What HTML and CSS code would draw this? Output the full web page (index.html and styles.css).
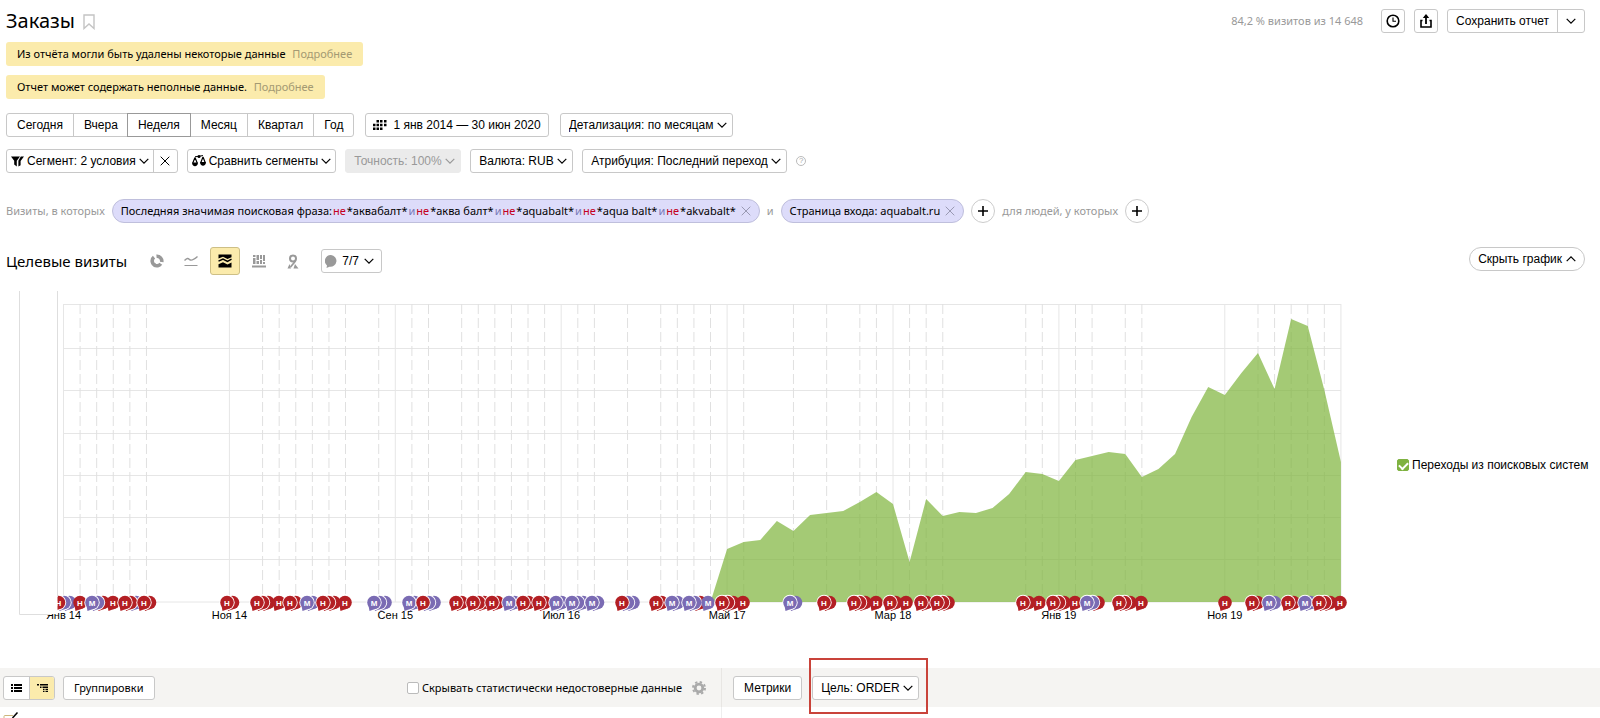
FILE: index.html
```
<!DOCTYPE html>
<html lang="ru">
<head>
<meta charset="utf-8">
<title>Заказы</title>
<meta name="viewport" content="width=device-width, initial-scale=1">
<link rel="stylesheet" href="styles.css">
</head>
<body>
<svg class="sprite" aria-hidden="true">
  <symbol id="i-chevron" viewBox="0 0 10 6"><path d="M.7.8 5 5.1 9.3.8" fill="none" stroke="currentColor" stroke-width="1.2"/></symbol>
  <symbol id="i-close" viewBox="0 0 10 10"><path d="M.7.7l8.6 8.6M9.3.7.7 9.3" fill="none" stroke="currentColor" stroke-width="1"/></symbol>
  <symbol id="i-plus" viewBox="0 0 10 10"><path d="M5 0v10M0 5h10" fill="none" stroke="currentColor" stroke-width="1.6"/></symbol>
</svg>

<header class="header">
  <h1 class="title">Заказы</h1>
  <button class="bare" aria-label="В избранное"><svg class="i-bookmark" viewBox="0 0 12 16"><path d="M1 1h10v13.5L6 10l-5 4.500z" fill="none" stroke="#c4c4c4" stroke-width="1.400"/></svg></button>
  <span class="visits">84,2 % визитов из 14 648</span>
  <button class="btn square" aria-label="История"><svg width="14" height="14" viewBox="0 0 14 14"><circle cx="7" cy="7" r="5.800" fill="none" stroke="#000" stroke-width="1.600"/><path d="M7 3.500V7.200h3" fill="none" stroke="#000" stroke-width="1.100"/></svg></button>
  <button class="btn square" aria-label="Экспорт"><svg width="12" height="14" viewBox="0 0 12 14"><path d="M2.500 6.500H1V13h10V6.500H9.500" fill="none" stroke="#000" stroke-width="1.600"/><path d="M6 3v7" stroke="#000" stroke-width="1.800"/><path d="M6 0l3.200 4H2.800z"/></svg></button>
  <div class="group save">
    <button class="seg">Сохранить отчет</button>
    <button class="seg narrow" aria-label="Ещё"><svg class="chev"><use href="#i-chevron"/></svg></button>
  </div>
</header>

<main>
<section class="notices">
  <p class="notice">Из отчёта могли быть удалены некоторые данные <a href="#">Подробнее</a></p>
  <p class="notice">Отчет может содержать неполные данные. <a href="#">Подробнее</a></p>
</section>

<div class="row periods">
  <div class="group">
    <button class="seg">Сегодня</button>
    <button class="seg">Вчера</button>
    <button class="seg current">Неделя</button>
    <button class="seg">Месяц</button>
    <button class="seg">Квартал</button>
    <button class="seg">Год</button>
  </div>
  <button class="btn date"><svg width="14" height="10" viewBox="0 0 14 10"><path d="M3.500 0h2.500v2.500H3.500zM7 0h2.500v2.500H7zM11 0h2.500v2.500H11zM0 3.700h2.500v2.500H0zM3.500 3.700h2.500v2.500H3.500zM7 3.700h2.500v2.500H7zM11 3.700h2.500v2.500H11zM0 7.400h2.500v2.500H0zM3.500 7.400h2.500v2.500H3.500zM7 7.400h2.500v2.500H7z"/></svg>1 янв 2014 — 30 июн 2020</button>
  <span class="select"><select aria-label="Детализация"><option>Детализация: по месяцам</option></select><svg class="chev"><use href="#i-chevron"/></svg></span>
</div>

<div class="row segments">
  <div class="group">
    <button class="seg tight"><svg width="13" height="11" viewBox="0 0 13 11"><path d="M0 .5h9L5.800 4.800V10.500L3.200 8.500V4.800zM9.800.5H13L9.600 4.900v4.300L7.400 10.500V4.800z"/></svg>Сегмент: 2 условия<svg class="chev"><use href="#i-chevron"/></svg></button>
    <button class="seg cross" aria-label="Сбросить сегмент"><svg width="10" height="10"><use href="#i-close"/></svg></button>
  </div>
  <button class="btn tight"><svg width="14" height="12" viewBox="0 0 14 12"><path d="M3 1.800 11 .6" stroke="#000" stroke-width="1"/><circle cx="7" cy="1.600" r="1.500"/><path d="M3 2.500.8 8M3 2.500 5.200 8M11 2 8.800 7.500M11 2l2.200 5.500" fill="none" stroke="#000" stroke-width="1.200"/><path d="M0 7.600h6c0 5-6 5-6 0zM8 7h6c0 5-6 5-6 0z"/></svg>Сравнить сегменты<svg class="chev"><use href="#i-chevron"/></svg></button>
  <span class="select off"><select aria-label="Точность" disabled><option>Точность: 100%</option></select><svg class="chev"><use href="#i-chevron"/></svg></span>
  <span class="select"><select aria-label="Валюта"><option>Валюта: RUB</option></select><svg class="chev"><use href="#i-chevron"/></svg></span>
  <span class="select"><select aria-label="Атрибуция"><option>Атрибуция: Последний переход</option></select><svg class="chev"><use href="#i-chevron"/></svg></span>
  <button class="help" aria-label="Справка">?</button>
</div>

<div class="row filters">
  <span class="muted">Визиты, в которых</span>
  <span class="pill"><span class="terms">Последняя значимая поисковая фраза: <b>не</b> *аквабалт* <i>и</i> <b>не</b> *аква балт* <i>и</i> <b>не</b> *aquabalt* <i>и</i> <b>не</b> *aqua balt* <i>и</i> <b>не</b> *akvabalt*</span><button class="bare" aria-label="Удалить условие"><svg width="10" height="10"><use href="#i-close"/></svg></button></span>
  <span class="muted">и</span>
  <span class="pill"><span>Страница входа: aquabalt.ru</span><button class="bare" aria-label="Удалить условие"><svg width="10" height="10"><use href="#i-close"/></svg></button></span>
  <button class="round" aria-label="Добавить условие для визитов"><svg width="10" height="10"><use href="#i-plus"/></svg></button>
  <span class="muted">для людей, у которых</span>
  <button class="round" aria-label="Добавить условие для людей"><svg width="10" height="10"><use href="#i-plus"/></svg></button>
</div>

<section>
  <div class="chart-head">
    <h2 class="subtitle">Целевые визиты</h2>
    <div class="views">
      <button class="view" aria-label="Круговая диаграмма"><svg width="14" height="14" viewBox="0 0 14 14"><g fill="none" stroke="#999" stroke-width="3.600"><path d="M6.500 2.300A4.800 4.800 0 0 1 11.700 8"/><path d="M10.800 9.800A4.800 4.800 0 0 1 4.300 11"/><path d="M5.500 11.500A4.800 4.800 0 0 1 4 3.200"/></g></svg></button>
      <button class="view" aria-label="Линии"><svg width="14" height="12" viewBox="0 0 14 12"><path d="M.5 5.500C3 3 4 3 5.500 4.500S9 5.500 13.500 1.500" fill="none" stroke="#999" stroke-width="1.400"/><path d="M.5 10.500h13" stroke="#999" stroke-width="1"/></svg></button>
      <button class="view active" aria-label="Области"><svg width="14" height="14" viewBox="0 0 14 14"><path d="M.5.5h13v2.700L9.500 5 5 2.800.5 4.500z"/><path d="M.5 7.200 5 5l4.500 2.300 4-2.100" fill="none" stroke="#000" stroke-width="1.500"/><path d="M.5 10.200 5 8.200l4.500 2.300 4-2V13.500H.5z"/></svg></button>
      <button class="view" aria-label="Столбцы"><svg width="14" height="14" viewBox="0 0 14 14" fill="#999"><path d="M1 1h2.500v2H1zM1 4h2.500v6H1zM4.500 1H7v5H4.500zM4.500 7H7v3H4.500zM8 1h2v4H8zM8 6h2v4H8zM11 1h2v6h-2zM11 8h2v2h-2zM0 11.500h14v2H0z"/></svg></button>
      <button class="view" aria-label="Карта"><svg width="12" height="15" viewBox="0 0 12 15"><circle cx="6" cy="4.500" r="3" fill="none" stroke="#999" stroke-width="2"/><path d="M8.500 7 3.500 13" stroke="#999" stroke-width="1.800"/><path d="M.5 14.500 2.500 10l1.500 4.500zM8 10l3.500 4.500H6.500z" fill="#999"/></svg></button>
    </div>
    <button class="btn notes"><svg width="12" height="13" viewBox="0 0 12 13"><path d="M6 0a6 5.900 0 1 1-1.500 11.700L1.500 13 2 10.400A6 5.900 0 0 1 6 0z" fill="#999"/></svg>7/7<svg class="chev"><use href="#i-chevron"/></svg></button>
    <button class="btn hide">Скрыть график<svg class="chev up"><use href="#i-chevron"/></svg></button>
  </div>
  <div class="chart-body">
    <svg class="chart" id="chart" viewBox="0 0 1374 342" role="img" aria-label="Целевые визиты по месяцам"></svg>
    <label class="legend"><input type="checkbox" checked>Переходы из поисковых систем</label>
  </div>
</section>

<section class="table-bar">
  <div class="bar-left">
    <div class="group">
      <button class="seg mode" aria-label="Список"><svg width="11" height="8" viewBox="0 0 11 8"><path d="M0 0h2v2H0zM3 0h8v2H3zM0 3h2v2H0zM3 3h8v2H3zM0 6h2v2H0zM3 6h8v2H3z"/></svg></button>
      <button class="seg mode chosen" aria-label="Дерево"><svg width="11" height="8" viewBox="0 0 11 8"><path d="M0 0h2v1.500H0zM3 0h8v1.500H3zM3 2.500h1.500V4H3zM5.500 2.500H11V4H5.500zM6 4.800h1.500v1.300H6zM8.500 4.800H11v1.300H8.500zM6 6.800h1.500V8H6zM8.500 6.800H11V8H8.500z"/></svg></button>
    </div>
    <button class="btn ys">Группировки</button>
    <label class="check"><input type="checkbox">Скрывать статистически недостоверные данные</label>
    <button class="bare" aria-label="Настройки"><svg width="14" height="14" viewBox="0 0 14 14"><circle cx="7" cy="7" r="3.800" fill="none" stroke="#aaa" stroke-width="2.800"/><circle cx="7" cy="7" r="6" fill="none" stroke="#aaa" stroke-width="2" stroke-dasharray="2.350 2.360"/></svg></button>
  </div>
  <div class="bar-right">
    <button class="btn">Метрики</button>
    <span class="select goal"><select aria-label="Цель"><option>Цель: ORDER</option></select><svg class="chev"><use href="#i-chevron"/></svg></span>
  </div>
</section>
<section class="table-top">
  <div class="cell-left"><svg width="16" height="6" viewBox="0 0 16 6"><path d="M1 6V4.500Q1 3.500 2 3.500h8" fill="none" stroke="#cdb67c"/><path d="M9.500 6 14.500.5" stroke="#000" stroke-width="1.500"/></svg></div>
  <div class="cell-right"></div>
</section>
</main>
<script src="chart.js"></script>
</body>
</html>
```

FILE: styles.css
```
* { box-sizing: border-box; }
body {
  margin: 0;
  background: #fff;
  color: #000;
  font-family: "Liberation Sans", Arial, sans-serif;
  font-size: 12px;
  line-height: 16px;
  overflow-x: hidden;
}
button, select, input { font: inherit; color: inherit; margin: 0; }
button, select { cursor: pointer; }
svg { display: block; flex: none; }
.sprite { position: absolute; width: 0; height: 0; }

.title, .subtitle { font-family: "Noto Sans", "Open Sans", sans-serif; }
.notice, .muted, .pill, .visits, .check, .ys { font-family: "Noto Sans", "Open Sans", sans-serif; font-size: 11px; }

.header { display: flex; align-items: center; padding: 9px 15px 0 6px; }
.title { margin: 0 8px 0 0; font-size: 20px; line-height: 24px; font-weight: 400; }
.bare { display: inline-flex; padding: 0; border: 0; background: none; }
.i-bookmark { width: 12px; height: 16px; margin-top: 2px; }
.visits { margin: 0 18px 0 auto; color: #999; }

.btn, .group, .select select {
  height: 24px;
  border: 1px solid #c8c8c8;
  border-radius: 3px;
  background: #fff;
}
.btn { display: inline-flex; align-items: center; padding: 0 10px; white-space: nowrap; }
.square { width: 24px; padding: 0; justify-content: center; margin-right: 9px; }
.group { display: inline-flex; }
.seg {
  display: inline-flex;
  align-items: center;
  justify-content: center;
  padding: 0 10px;
  border: 0;
  border-left: 1px solid #c8c8c8;
  background: none;
  white-space: nowrap;
}
.seg:first-child { border-left: 0; }
.seg.current { margin: -1px; border: 1px solid #999; z-index: 1; }
.save .seg { padding: 0 8px; }
.save .narrow { width: 27px; padding: 0; }
.chev { width: 10px; height: 6px; }
.chev.up { transform: rotate(180deg); margin-left: 4px; }

.select { position: relative; display: inline-flex; }
.select select { appearance: none; padding: 0 18px 0 8px; opacity: 1; }
.select .chev { position: absolute; right: 6px; top: 9px; pointer-events: none; }
.select.off { color: #999; }
.select.off select { background: #ebebeb; border-color: #ebebeb; }

.notices { display: flex; flex-direction: column; align-items: flex-start; gap: 9px; padding: 9px 6px 0; }
.notice { margin: 0; padding: 4px 11px; border-radius: 3px; background: #fbebac; }
.notice a { margin-left: 4px; color: #a49a73; text-decoration: none; }

.row { display: flex; align-items: center; padding: 0 6px; }
.periods { gap: 11px; margin-top: 14px; }
.date { gap: 6px; padding: 0 7px; }
.segments { gap: 9px; margin-top: 12px; }
.tight { padding: 0 4px; gap: 3px; }
.cross { width: 24px; padding: 0; }
.help { width: 10px; height: 10px; padding: 0; border: 1px solid #bbb; border-radius: 50%; background: none; color: #aaa; font-size: 8px; line-height: 8px; }

.filters { gap: 7px; margin-top: 26px; }
.muted { color: #999; }
.pill { display: inline-flex; align-items: center; height: 24px; padding: 0 8px; border: 1px solid #bfbfdc; border-radius: 12px; background: #dddcfa; white-space: nowrap; }
.terms { display: inline-flex; gap: 1px; }
.pill b { color: #c4001d; font-weight: 400; }
.pill i { color: #7878b8; font-style: normal; }
.pill .bare { margin-left: 5px; color: #9999b3; }
.round { display: inline-flex; align-items: center; justify-content: center; width: 24px; height: 24px; padding: 0; border: 1px solid #ccc; border-radius: 50%; background: #fff; }

.chart-head { display: flex; align-items: center; margin-top: 24px; padding: 0 15px 0 6px; }
.subtitle { margin: 0 15px 0 0; font-size: 15px; line-height: 24px; font-weight: 400; }
.views { display: flex; gap: 4px; }
.view { display: flex; align-items: center; justify-content: center; width: 30px; height: 28px; padding: 0; border: 1px solid transparent; border-radius: 3px; background: none; }
.view.active { background: #fbebac; border-color: #cdbf86; }
.notes { margin-left: 13px; padding: 0 7px 0 3px; gap: 5px; }
.hide { margin: -4px 0 0 auto; padding: 0 8px; border-radius: 12px; }

.chart-body { display: flex; align-items: center; padding-top: 10px; }
.chart { flex: 1; min-width: 0; height: auto; }
.legend { display: flex; flex: 0 0 226px; align-items: center; gap: 3px; padding: 17px 0 0 23px; white-space: nowrap; }
input[type="checkbox"] { appearance: none; width: 12px; height: 12px; border: 1px solid #bbb; border-radius: 2px; background: #fff; }
.legend input:checked { border-color: #7fb241; background: #7fb241; }
.legend input:checked::after { content: ""; display: block; width: 7px; height: 4px; margin: 2px 0 0 1px; border: solid #fff; border-width: 0 0 2px 2px; transform: rotate(-45deg); }

.month { font: 11px "Liberation Sans", Arial, sans-serif; text-anchor: middle; }
.letter { font: bold 8px "Liberation Sans", Arial, sans-serif; text-anchor: middle; fill: #fff; }
.grid { stroke: #e6e6e6; fill: none; }
.dashed { stroke: #e0e0e0; stroke-dasharray: 10 4; }
.area { fill: #7fb53d; fill-opacity: .71; }
.frame { fill: none; stroke: #dedede; }

.table-bar { display: flex; margin-top: 41px; background: #f5f4f2; height: 39px; }
.bar-left, .cell-left { display: flex; align-items: center; flex: 0 0 calc(45% + 1px); padding-left: 3px; }
.bar-right { display: flex; align-items: center; flex: 1; gap: 10px; padding-left: 11px; border-left: 1px solid #e8e6e3; }
.mode { width: 25px; padding: 0; }
.mode.chosen { background: #fbebac; border-radius: 0 2px 2px 0; }
.bar-left .btn { margin-left: 8px; }
.check { display: flex; align-items: center; gap: 3px; margin-left: auto; }
.bar-left .bare { margin: 0 15px 0 10px; }
.goal::after { content: ""; position: absolute; inset: -18px -9px -14px -3px; border: 2px solid #c9433a; pointer-events: none; }
.table-top { display: flex; height: 11px; }
.cell-left { align-items: flex-end; }
.cell-right { flex: 1; border-left: 1px solid #eee; }
```

FILE: chart.js
```
const NS = "http://www.w3.org/2000/svg";
const svg = document.getElementById("chart");
const left = 63.5, step = 16.59, base = 317, top0 = 19;
const RED = "#b31f24", VIOLET = "#7a6bb3";

function add(parent, name, attrs, text) {
  const el = document.createElementNS(NS, name);
  for (const key in attrs) el.setAttribute(key, attrs[key]);
  if (text) el.textContent = text;
  parent.appendChild(el);
  return el;
}
const monthX = i => left + step * i;

const months = [[0, "Янв 14"], [10, "Ноя 14"], [20, "Сен 15"], [30, "Июл 16"], [40, "Май 17"], [50, "Мар 18"], [60, "Янв 19"], [70, "Ноя 19"]];
const dashed = [1, 2, 3, 4, 5, 12, 13, 14, 15, 16, 17, 19, 21, 22, 24, 25, 26, 27, 28, 29, 31, 32, 34, 36, 37, 38, 39, 41, 44, 46, 48, 49, 51, 52, 53, 58, 59, 61, 62, 64, 65, 72, 73, 74, 75, 76];

for (const y of [19.5, 63.5, 105.5, 148.5, 190.5, 232.5, 274.5, 317]) {
  add(svg, "path", { class: "grid", d: `M${left} ${y}H${monthX(77)}` });
}
for (const [i] of [...months, [77]]) {
  add(svg, "path", { class: "grid", d: `M${monthX(i)} ${top0}V${base}` });
}
for (const i of dashed) {
  add(svg, "path", { class: "grid dashed", d: `M${monthX(i)} ${top0}V${base}` });
}

/* Heights of the area above the base line, from month 39 on */
const values = [0, 53, 60, 62, 81, 71, 87, 89, 91, 100, 110, 98, 40, 103, 86, 90, 89, 94, 108, 130, 128, 121, 142, 146, 150, 148, 125, 133, 148, 185, 215, 207, 229, 249, 213, 283, 276, 212, 140];
const line = values.map((v, i) => `${monthX(39 + i)} ${base - v}`).join("L");
add(svg, "path", { class: "area", d: `M${line}V${base}H${monthX(39)}Z` });

for (const [i, label] of months) {
  add(svg, "text", { class: "month", x: monthX(i), y: 334 }, label);
}

/* Notes: centre, letter, then the colours of the notes stacked behind */
const notes = [
  [58.5, "H", "vv"], [80, "H", ""], [92, "M", "vr"], [113, "H", ""], [125, "H", "rv"], [144, "H", "r"],
  [227, "H", "r"], [257, "H", "rr"], [279, "H", ""], [290, "H", "r"], [307, "M", "v"], [323, "H", "rr"], [345, "H", ""],
  [374, "M", "vv"], [409, "M", "v"], [423, "H", "vv"], [456, "H", "r"], [473, "H", "rr"], [492, "H", "r"],
  [509, "M", "v"], [523, "H", "r"], [539, "H", "r"], [556, "M", "v"], [572, "M", "vv"], [592, "M", "v"],
  [622, "H", "vv"], [656, "H", "r"], [672, "M", "v"], [689, "M", "vr"], [708, "M", ""], [722, "H", "rr"], [743, "H", ""],
  [790, "M", "v"], [824, "H", "r"], [854, "H", "rr"], [876, "H", ""], [890, "H", "r"], [906, "H", ""], [921, "H", "r"], [937, "H", "rr"],
  [1023, "H", "r"], [1039, "H", ""], [1053, "H", "rr"], [1075, "H", ""], [1087, "M", "vr"], [1119, "H", "rr"], [1141, "H", ""],
  [1225, "H", ""], [1252, "H", "r"], [1269, "M", "v"], [1288, "H", "r"], [1305, "M", "v"], [1319, "H", "rr"], [1340, "H", ""]
];
function bubble(x, color, outlined) {
  const y = base + .5;
  if (outlined) {
    add(svg, "circle", { cx: x, cy: y, r: 7.700, fill: "#fff" });
  }
  add(svg, "circle", { cx: x, cy: y, r: 6.800, fill: color });
  add(svg, "path", { d: `M${x - 5.500} ${y + 3}L${x - 4.500} ${y + 8.500}L${x + 1} ${y + 6.500}Z`, fill: color });
}
for (const [x, letter, behind] of notes) {
  for (let k = behind.length - 1; k >= 0; k--) {
    bubble(x + 5.500 * (k + 1), behind[k] === "r" ? RED : VIOLET, k < behind.length - 1);
  }
  bubble(x, letter === "H" ? RED : VIOLET, behind.length > 0);
  add(svg, "text", { class: "letter", x, y: base + 3.500 }, letter);
}

/* Scale panel that lies over the left edge of the plot */
add(svg, "rect", { x: 19.5, y: 4, width: 38, height: 325, fill: "#fff" });
add(svg, "path", { class: "frame", d: "M19.500 6V329.500H50M57.500 6V312" });
```
